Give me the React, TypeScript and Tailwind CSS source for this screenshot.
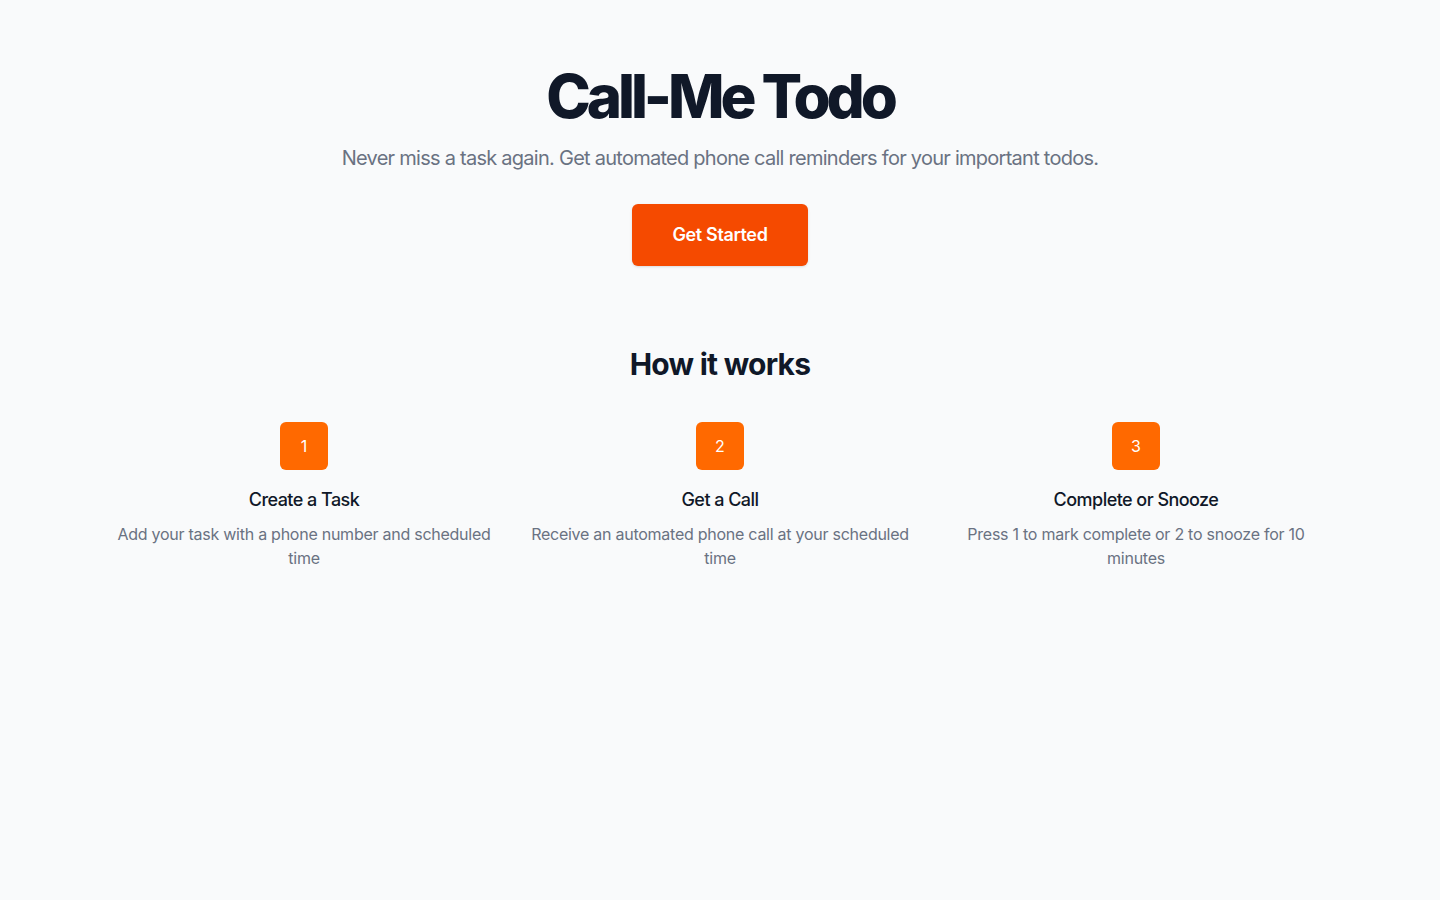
export default function App() {
  const steps = [
    { n: 1, title: "Create a Task", text: "Add your task with a phone number and scheduled time" },
    { n: 2, title: "Get a Call", text: "Receive an automated phone call at your scheduled time" },
    { n: 3, title: "Complete or Snooze", text: "Press 1 to mark complete or 2 to snooze for 10 minutes" },
  ];

  return (
    <div className="min-h-screen bg-gray-50 font-['Inter',sans-serif]">
      <div className="mx-auto max-w-7xl px-8 pt-[66px] text-center">
        <h1 className="text-6xl font-extrabold leading-[60px] tracking-[-0.068em] text-gray-900">Call-Me Todo</h1>
        <p className="mt-[18px] text-xl tracking-[-0.037em] text-gray-500">
          Never miss a task again. Get automated phone call reminders for your important todos.
        </p>
        <button className="mt-8 rounded-md bg-orange-600 px-10 py-[17px] text-lg font-semibold leading-7 tracking-[-0.02em] text-white shadow-sm">
          Get Started
        </button>

        <h2 className="mt-20 text-3xl font-bold tracking-[-0.025em] text-gray-900">How it works</h2>
        <div className="mt-10 grid grid-cols-3 gap-8">
          {steps.map((s) => (
            <div key={s.n} className="flex flex-col items-center">
              <div className="flex h-12 w-12 items-center justify-center rounded-md bg-orange-500 text-base text-white">
                {s.n}
              </div>
              <h3 className="mt-4 text-lg font-medium tracking-[-0.03em] text-gray-900">{s.title}</h3>
              <p className="mt-2 text-base tracking-[-0.016em] text-gray-500">{s.text}</p>
            </div>
          ))}
        </div>
      </div>
    </div>
  );
}
